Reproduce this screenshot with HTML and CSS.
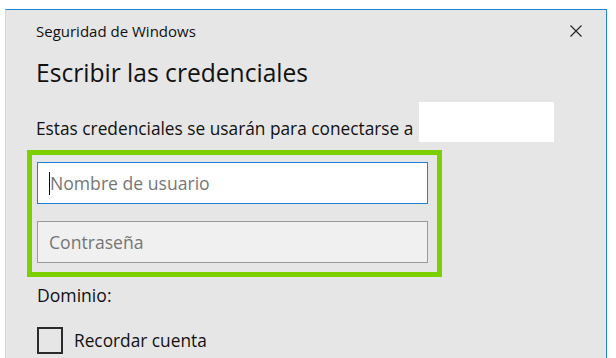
FILE: index.html
```html
<!DOCTYPE html>
<html lang="es">
<head>
<meta charset="utf-8">
<link rel="stylesheet" href="styles.css">
</head>
<body>
<div class="dialog">
  <div class="titlebar">
    <span class="app-title">Seguridad de Windows</span>
    <svg class="close" width="12" height="12" viewBox="0 0 12 12"><path d="M0.5 0.5 L11.5 11.5 M11.5 0.5 L0.5 11.5" stroke="#222" stroke-width="1.1" fill="none"/></svg>
  </div>
  <h1 class="heading">Escribir las credenciales</h1>
  <div class="info">
    <span class="info-text">Estas credenciales se usarán para conectarse a</span>
    <span class="target"></span>
  </div>
  <div class="highlight">
    <div class="field field-active"><span class="caret"></span><span class="ph">Nombre de usuario</span></div>
    <div class="field field-pass"><span class="ph">Contraseña</span></div>
  </div>
  <div class="domain">Dominio:</div>
  <div class="remember"><span class="check"></span><span>Recordar cuenta</span></div>
</div>
</body>
</html>
```
FILE: styles.css
```css
html, body { margin: 0; padding: 0; background: #ffffff; }
body { width: 616px; height: 358px; overflow: hidden; font-family: "Open Sans", "Noto Sans", sans-serif; color: #111111; }
.dialog {
  margin: 9px 0 0 5px;
  width: 600px;
  height: 349px;
  background: #e6e6e6;
  border-top: 1px solid #1c86d8;
  border-right: 1px solid #1c86d8;
  border-left: 1px solid #d6d6d6;
}
.titlebar {
  display: flex;
  justify-content: space-between;
  align-items: center;
  padding: 11px 24px 0 30px;
  height: 20px;
}
.app-title { font-size: 15px; line-height: 20px; }
.close { display: block; }
.heading {
  margin: 15px 0 0 30px;
  font-size: 24.6px;
  font-weight: 400;
  line-height: 34px;
  letter-spacing: 0;
}
.info {
  display: flex;
  align-items: flex-start;
  margin: 12px 0 0 30px;
  font-size: 17.3px;
  height: 40px;
}
.info-text { margin-top: 15px; line-height: 24px; }
.target { display: block; width: 135px; height: 40px; background: #ffffff; margin-left: 6px; }
.highlight {
  margin: 8px 0 0 21px;
  width: 415px;
  height: 127px;
  border: 5px solid #7dd000;
  box-sizing: border-box;
  padding: 7px 0 0 5px;
  display: flex;
  flex-direction: column;
  gap: 17px;
}
.field {
  width: 391px;
  height: 42px;
  box-sizing: border-box;
  display: flex;
  align-items: center;
  padding-left: 11px;
  font-size: 17.6px;
}
.field-active { border: 1px solid #1e7fd6; background: #ffffff; }
.field-pass { border: 1px solid #9a9a9a; background: #f0f0f0; }
.ph { color: #767676; }
.caret { display: block; width: 1px; height: 23px; background: #111; }
.domain { margin: 6px 0 0 31px; font-size: 17.6px; line-height: 24px; }
.remember {
  display: flex;
  align-items: center;
  margin: 20px 0 0 31px;
  font-size: 17.3px;
  gap: 11px;
}
.check { display: block; width: 26px; height: 27px; box-sizing: border-box; border: 2px solid #2b2b2b; }
```
